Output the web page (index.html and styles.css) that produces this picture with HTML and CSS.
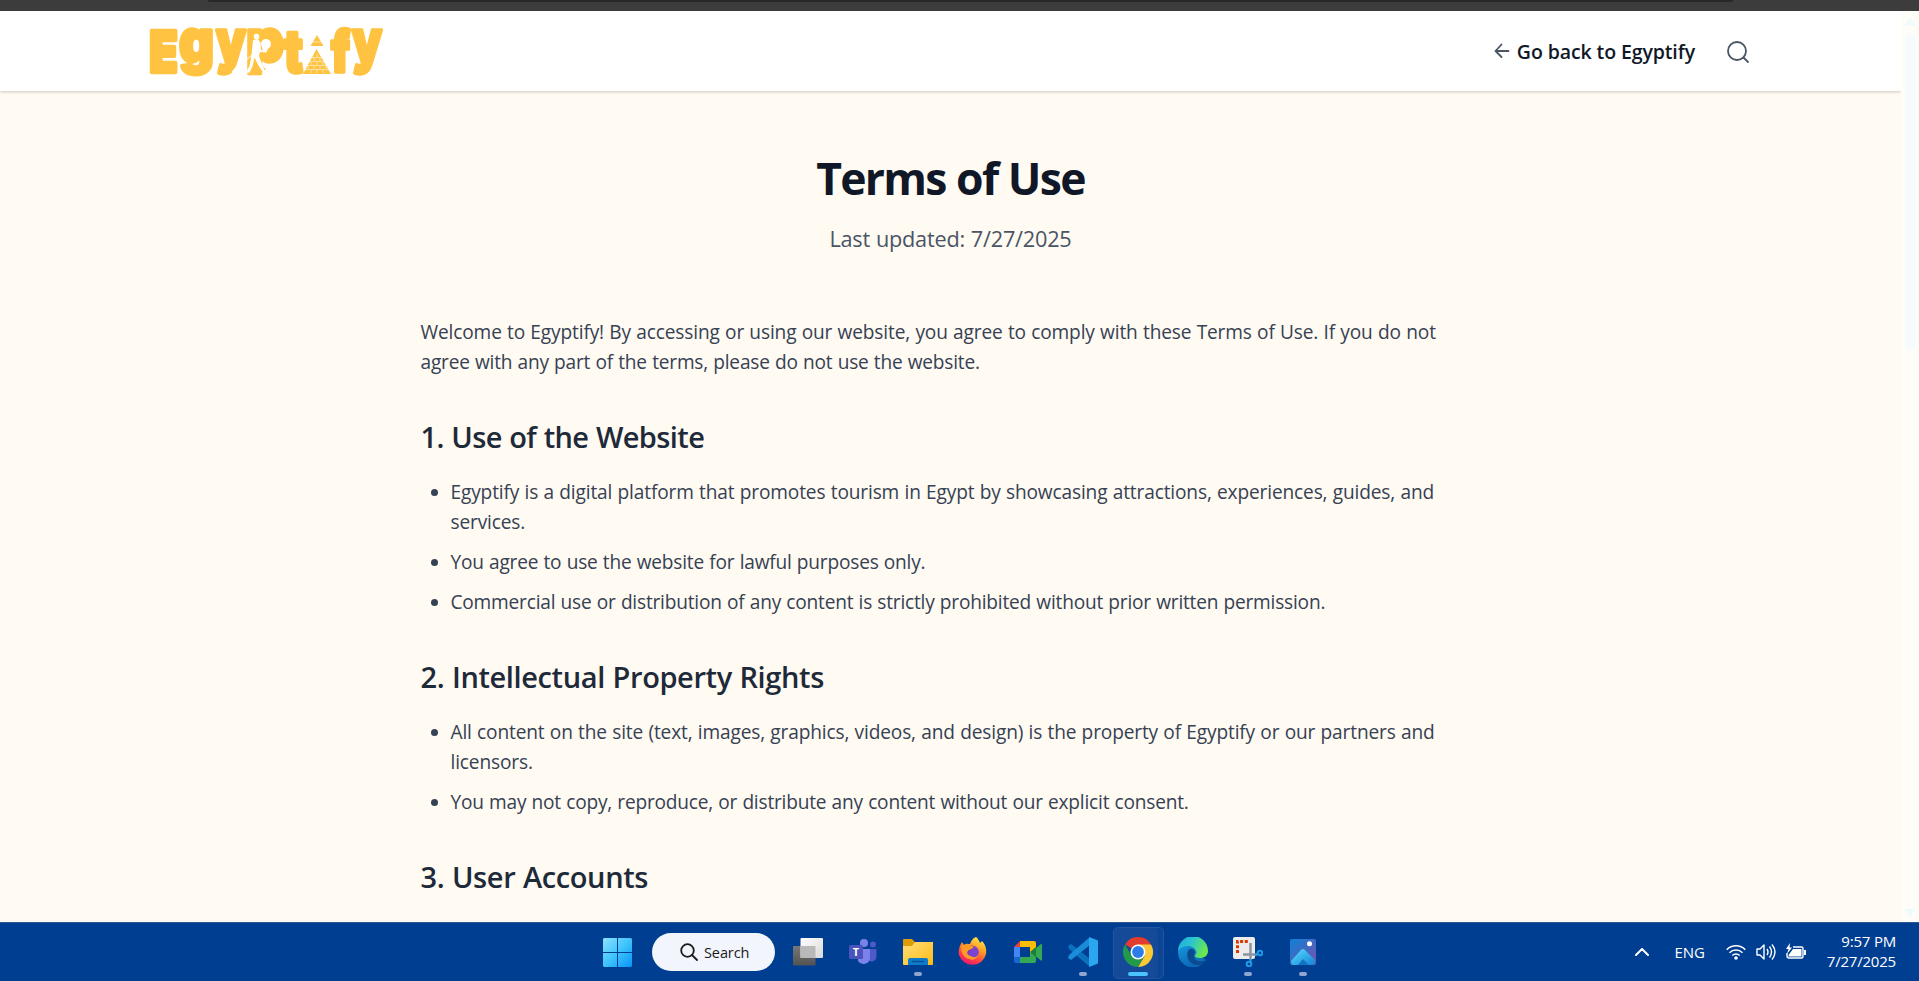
FILE: index.html
```html
<!DOCTYPE html>
<html lang="en">
<head>
<meta charset="utf-8">
<title>Terms of Use</title>
<link rel="stylesheet" href="styles.css">
</head>
<body>
<div class="screen">
  <div class="browser-edge"><div class="omnibox"></div></div>
  <div class="viewport">
    <div class="page">
      <header class="site-header">
        <svg class="logo" viewBox="0 0 234 50" width="234" height="50" role="img" aria-label="Egyptify">
          <g class="logo-letters">
            <text class="heavy" x="-.500" y="46" font-size="56" textLength="28" lengthAdjust="spacingAndGlyphs">E</text>
            <text x="29" y="36" font-size="59" textLength="35" lengthAdjust="spacingAndGlyphs">g</text>
            <text x="66" y="36" font-size="59" textLength="30" lengthAdjust="spacingAndGlyphs">y</text>
            <text x="96" y="36" font-size="59" textLength="38" lengthAdjust="spacingAndGlyphs">p</text>
            <text x="134" y="46" font-size="59" textLength="19" lengthAdjust="spacingAndGlyphs">t</text>
            <text x="181" y="46" font-size="57" textLength="19" lengthAdjust="spacingAndGlyphs">f</text>
            <text x="202" y="36" font-size="59" textLength="30" lengthAdjust="spacingAndGlyphs">y</text>
          </g>
          <path class="gold" d="M167 9l6.500 11h-13zM166.500 23L181 48h-28z"/>
          <path class="gap-thin" d="M162 16h10M160 31.500h13M158 35.500h17M156 39.500h22M154 43.500h26M167 28v3M164 32v3M170 32v3M161 36v3M167 36v3M173 36v3M158 40v3M164 40v3M170 40v3M176 40v3M161 44v3M167 44v3M173 44v3"/>
          <path class="gold" d="M97 46l8-15 13 15z"/>
          <circle class="cut" cx="116" cy="18" r="5"/>
          <circle class="cut" cx="106.500" cy="10.500" r="2.800"/>
          <path class="cut" d="M103 14l5-1 2.500 4 .5 7 6 1-1 1.500-6-.5-1 4 3 8 2.500 6 5.500-1-1 2.500-6 1-4.500-7-4-8-2 9-3 6-4 .500 4-7 2-11z"/>
          <path class="cut" d="M89 37l4 2-7 10-4.500-3z"/>
          <path class="gap" d="M102 29L91 38"/>
        </svg>
        <nav class="site-nav">
          <a class="back-link">
            <svg width="16" height="16" viewBox="0 0 16 16"><path class="nav-stroke" d="M7.500 1.500L1.500 8l6 6M1.500 8H14.500"/></svg>
            <span class="back-label">Go back to Egyptify</span>
          </a>
          <svg class="search-icon" width="24" height="24" viewBox="0 0 24 24"><circle class="nav-stroke" cx="11" cy="11" r="9"/><path class="nav-stroke" d="M17.500 17.500l4.500 4.500"/></svg>
        </nav>
      </header>
      <main class="content">
        <h1>Terms of Use</h1>
        <p class="updated">Last updated: 7/27/2025</p>
        <p>Welcome to Egyptify! By accessing or using our website, you agree to comply with these Terms of Use. If you do not<br><span class="tight">agree with any part of the terms, please do not use the website.</span></p>
        <section>
          <h2 class="tight-heading">1. Use of the Website</h2>
          <ul>
            <li>Egyptify is a digital platform that promotes tourism in Egypt by showcasing attractions, experiences, guides, and<br>services.</li>
            <li class="tight">You agree to use the website for lawful purposes only.</li>
            <li class="tight">Commercial use or distribution of any content is strictly prohibited without prior written permission.</li>
          </ul>
        </section>
        <section>
          <h2>2. Intellectual Property Rights</h2>
          <ul>
            <li>All content on the site (text, images, graphics, videos, and design) is the property of Egyptify or our partners and<br>licensors.</li>
            <li class="tight">You may not copy, reproduce, or distribute any content without our explicit consent.</li>
          </ul>
        </section>
        <section>
          <h2>3. User Accounts</h2>
        </section>
      </main>
    </div>
    <div class="scrollbar">
      <svg width="12" height="8" viewBox="0 0 12 8"><path d="M6 0l6 8H0z"/></svg>
      <div class="thumb"></div>
      <svg class="down" width="12" height="8" viewBox="0 0 12 8"><path d="M6 8l6-8H0z"/></svg>
    </div>
  </div>
  <footer class="taskbar">
    <div class="launcher">
      <div class="start">
        <svg width="29" height="29" viewBox="0 0 29 29">
          <defs><linearGradient id="win" x1="0" y1="0" x2="29" y2="29" gradientUnits="userSpaceOnUse"><stop offset="0" stop-color="#8be2ff"/><stop offset=".5" stop-color="#3fc4fb"/><stop offset="1" stop-color="#0a94f5"/></linearGradient></defs>
          <path fill="url(#win)" d="M1 0h13v14H0V1zM15 0h13l1 1v13H15zM0 15h14v14H1l-1-1zM15 15h14v13l-1 1H15z"/>
        </svg>
      </div>
      <div class="search-pill">
        <svg width="18" height="18" viewBox="0 0 18 18"><circle class="pill-stroke" cx="7.500" cy="7.500" r="6.300"/><path class="pill-stroke" d="M12 12l5 5"/></svg>
        <span>Search</span>
      </div>
      <div class="apps">
        <div class="app">
          <svg width="30" height="30" viewBox="0 0 30 30">
            <defs><linearGradient id="tv1" x1="0" y1="0" x2="1" y2="1"><stop offset="0" stop-color="#fff"/><stop offset="1" stop-color="#d9d9da"/></linearGradient><linearGradient id="tv2" x1="0" y1="0" x2="0" y2="1"><stop offset="0" stop-color="#777"/><stop offset="1" stop-color="#535353"/></linearGradient></defs>
            <rect x="0" y="9" width="22.500" height="19.500" rx="1" fill="url(#tv2)"/><rect x="7.500" y="1" width="22.500" height="20" rx="1" fill="url(#tv1)"/><path fill="#b9b9b9" d="M7.500 9h15v12h-15z"/>
          </svg>
        </div>
        <div class="app">
          <svg width="30" height="30" viewBox="0 0 30 30">
            <circle cx="16" cy="6" r="4" fill="#7b83eb"/><circle cx="25" cy="7.500" r="3" fill="#5059c9"/><path fill="#5059c9" d="M20 12h8.500v8a5 5 0 0 1-8.500 3z"/><path fill="#7b83eb" d="M10 12h12v9a6.500 6.500 0 0 1-12 3z"/><rect x="1" y="8" width="14" height="14" rx="1.500" fill="#4b53bc"/><text class="teams-letter" x="8" y="19" text-anchor="middle">T</text>
          </svg>
        </div>
        <div class="app running">
          <svg width="30" height="30" viewBox="0 0 30 30">
            <defs><linearGradient id="fold" x1="0" y1="0" x2="1" y2="1"><stop offset="0" stop-color="#ffe07a"/><stop offset="1" stop-color="#fdb914"/></linearGradient></defs>
            <path fill="#dd9d05" d="M0 3a1 1 0 0 1 1-1h8l3 3h17a1 1 0 0 1 1 1v6H0z"/><path fill="url(#fold)" d="M0 9h9l3-4h18v22a1 1 0 0 1-1 1H1a1 1 0 0 1-1-1z"/><path fill="#0d7bc9" d="M5 28v-5a2 2 0 0 1 2-2h16a2 2 0 0 1 2 2v5z"/><path stroke="#084d8c" stroke-width="1.200" d="M9 24.500h12"/>
          </svg>
        </div>
        <div class="app">
          <svg width="30" height="30" viewBox="0 0 30 30">
            <defs><linearGradient id="fx" x1=".8" y1="0" x2=".3" y2="1"><stop offset="0" stop-color="#fff24a"/><stop offset=".4" stop-color="#ff9a26"/><stop offset=".75" stop-color="#ff3d47"/><stop offset="1" stop-color="#e51879"/></linearGradient></defs>
            <path fill="url(#fx)" d="M18 0c2 1 3 4 4 6l2-2c3 3 5 8 4 13a14 14 0 0 1-27 1C0 13 2 8 4 5l2 3c2-2 4-1 6-1 1-3 3-6 6-7z"/><circle cx="14" cy="15" r="6.500" fill="#6b3bc6"/><path fill="#ff9a26" d="M3 9c4-3 8 1 13 0-1 3-3 3-5 4-3 2-2 5 2 6 4 1 6-1 7-3 0 6-5 8-9 6-5-1-8-6-8-13z"/><path fill="#7c43cf" d="M16 9c5 2 6 7 3 10-2 2-5 1-6 0-3-1-3-4-1-5 2-2 4-2 4-5z"/>
          </svg>
        </div>
        <div class="app">
          <svg width="30" height="30" viewBox="0 0 30 30">
            <path fill="#ea4335" d="M7 4v6H1z"/><path fill="#fbbc04" d="M7 4h14a2 2 0 0 1 2 2v9l-6 1v-6H7z"/><path fill="#4285f4" d="M1 10h6v10H1z"/><path fill="#1967d2" d="M1 20h6v6H3a2 2 0 0 1-2-2z"/><path fill="#34a853" d="M7 20h10v-4l6-1v9a2 2 0 0 1-2 2H7zM23 11l5-4c1-.5 1 0 1 1v15c0 1-1 1-1 .500l-5-4z"/><path fill="#188038" d="M23 10v10l-6-5z"/>
          </svg>
        </div>
        <div class="app running">
          <svg width="30" height="30" viewBox="0 0 30 30">
            <path fill="#0a72bd" d="M0 9l3-2 19 15v8L1 12z"/><path fill="#1b8cd8" d="M0 21l3 2L22 8V0L1 18z"/><path fill="#2ba6f0" d="M21 0l8 3 1 1v22l-1 1-8 3z"/>
          </svg>
        </div>
        <div class="app active running">
          <svg width="30" height="30" viewBox="0 0 30 30">
            <path fill="#e33b2e" d="M15 15L2 7.500A15 15 0 0 1 28 7.500z"/><path fill="#fcc934" d="M15 7.500h13A15 15 0 0 1 15 30l6.500-11z"/><path fill="#229a4b" d="M2 7.500A15 15 0 0 0 15 30l6.500-11.200L15 15 8.500 18.800z"/><circle cx="15" cy="15" r="7.500" fill="#fff"/><circle cx="15" cy="15" r="5.900" fill="#2b7de9"/>
          </svg>
        </div>
        <div class="app">
          <svg width="30" height="30" viewBox="0 0 30 30">
            <defs><linearGradient id="ed1" x1="0" y1="0" x2="1" y2=".4"><stop offset="0" stop-color="#1fa5e8"/><stop offset=".5" stop-color="#2dc6cb"/><stop offset="1" stop-color="#69e650"/></linearGradient><linearGradient id="ed2" x1="0" y1="0" x2=".5" y2="1"><stop offset="0" stop-color="#1697dd"/><stop offset="1" stop-color="#0b66b5"/></linearGradient></defs>
            <path fill="url(#ed2)" d="M0 15C0 8 7 7 11 8c6 1 8 5 7 8l10 7A15 15 0 0 1 0 15z"/><path fill="#0c4a8f" d="M10 14c-3 8 3 15 12 14 3-1 5-3 6-5-5 3-12 1-12-4 0-2 1-3 1-4-1-4-6-4-7-1z"/><path fill="url(#ed1)" d="M0 14A15 15 0 0 1 30 14c0 5-4 7-8 7-3 0-5-1-5-2 0-1 2-2 1-5C16 8 5 7 0 14z"/>
          </svg>
        </div>
        <div class="app running">
          <svg class="snip" width="30" height="30" viewBox="0 0 30 30">
            <rect x="0" y="0" width="22" height="22" rx="2" fill="#ececec"/><path fill="none" stroke="#d83b01" stroke-width="3" stroke-dasharray="3 1.700" d="M4.500 16V4.500H16"/><path fill="none" stroke="#8b949d" stroke-width="2.400" d="M17.500 6v17M10 17.500h14"/><g fill="none" stroke="#1e9be6" stroke-width="2"><circle cx="16" cy="27" r="2.300"/><circle cx="27" cy="16" r="2.300"/><path d="M17.500 22v3M22 17.500l3-1"/></g>
          </svg>
        </div>
        <div class="app running">
          <svg width="26" height="26" viewBox="0 0 26 26">
            <defs><linearGradient id="ph" x1="0" y1="0" x2="1" y2="1"><stop offset="0" stop-color="#0c83d6"/><stop offset="1" stop-color="#7a4fae"/></linearGradient><linearGradient id="mt" x1="0" y1="0" x2="1" y2="1"><stop offset="0" stop-color="#5be0ff"/><stop offset="1" stop-color="#1481d6"/></linearGradient></defs>
            <rect width="26" height="26" rx="2" fill="url(#ph)"/><path fill="url(#mt)" d="M1 22L11 11q2-2 4 0l10 10v3l-1 2H2z"/><path fill="#1373c5" d="M8 26l5-6 6 6z"/><circle cx="19.500" cy="4.700" r="2.500" fill="#fff"/>
          </svg>
        </div>
      </div>
    </div>
    <div class="tray">
      <svg class="chevron" width="14" height="8" viewBox="0 0 14 8"><path class="tray-stroke thick" d="M1 7l6-6 6 6"/></svg>
      <span class="lang">ENG</span>
      <svg width="20" height="16" viewBox="0 0 20 16"><path class="tray-stroke" d="M.7 5.700a13 13 0 0 1 18.600 0M3.500 8.700a9.200 9.200 0 0 1 13 0M6.300 11.500a5.300 5.300 0 0 1 7.400 0"/><circle cx="10" cy="14" r="1.800" fill="#fff"/></svg>
      <svg width="20" height="18" viewBox="0 0 20 18"><path class="tray-stroke" d="M1 6h3l4-4v14l-4-4H1zM11 6q2 3 0 6M13.500 3.500q4 5.500 0 11M16 1.500q6 7.500 0 15"/></svg>
      <svg width="20" height="18" viewBox="0 0 20 18"><path class="tray-stroke" d="M7 4h8.500q1.500 0 1.500 1.500v8q0 1.500-1.500 1.500H3q-2 0-2-2v-3"/><path fill="#fff" d="M7 6h8.500v7.500h-13V12zM18 7h2v5h-2zM4 0L0 6h2.500L1 11l5-6.500H3.500z"/></svg>
      <div class="clock"><span>9:57 PM</span><span>7/27/2025</span></div>
    </div>
  </footer>
</div>
</body>
</html>
```
FILE: styles.css
```css
* { box-sizing: border-box; margin: 0; padding: 0; }
body { font-family: "Open Sans", "Noto Sans", sans-serif; overflow: hidden; }
svg { display: block; flex: none; }
.screen { width: 1919px; height: 981px; display: flex; flex-direction: column; background: #fffaf2; }
.browser-edge { height: 11px; flex: none; background: #3c3c3c; padding: 0 186px 0 208px; }
.omnibox { height: 2px; background: #282828; border-radius: 0 0 8px 8px; }
.viewport { flex: 1; min-height: 0; display: flex; }
.page { width: 1901px; overflow: hidden; }

.site-header { height: 80px; padding: 0 151px 0 150px; display: flex; align-items: center; justify-content: space-between; background: #fff; box-shadow: 0 1px 3px rgba(0, 0, 0, .2); }
.logo { overflow: visible; }
.logo-letters { font-family: Inter, sans-serif; font-weight: 900; fill: #ffc341; stroke: #ffc341; stroke-width: 3.4; stroke-linejoin: round; }
.heavy { stroke-width: 4.6; }
.gold { fill: #ffc341; }
.cut { fill: #fff; }
.gap { fill: none; stroke: #fff; stroke-width: 1; }
.gap-thin { fill: none; stroke: #fff; stroke-width: .5; }
.site-nav { display: flex; align-items: center; gap: 31px; }
.back-link { display: flex; align-items: center; gap: 7px; color: #101828; font-size: 19.5px; font-weight: 600; letter-spacing: -.1px; }
.back-label { padding-top: 1px; }
.nav-stroke { fill: none; stroke: #4a5565; stroke-width: 1.8; stroke-linecap: round; stroke-linejoin: round; }
.search-icon { margin-top: 1px; }

.content { width: 1120px; margin: 0 auto; padding: 62px 30px 0; color: #364153; font-size: 19.1px; line-height: 30px; letter-spacing: -.14px; word-spacing: .5px; white-space: nowrap; }
.tight { letter-spacing: -.2px; }
h1 { font-size: 44.5px; line-height: 50px; font-weight: 700; letter-spacing: -1.7px; text-align: center; color: #101828; margin-bottom: 18px; }
.content .updated { font-size: 21.7px; line-height: 35px; letter-spacing: -.22px; text-align: center; color: #4a5565; margin-bottom: 61px; }
section { margin-top: 40px; }
h2 { font-size: 29px; line-height: 40px; font-weight: 600; letter-spacing: -.38px; color: #1e2939; margin-bottom: 20px; }
h2.tight-heading { letter-spacing: -.6px; }
ul { padding-left: 30px; display: flex; flex-direction: column; gap: 10px; }

.scrollbar { width: 18px; background: #fffdf8; display: flex; flex-direction: column; align-items: center; padding: 7px 0 5px; fill: #effafc; }
.thumb { width: 11px; height: 318px; margin-top: 7px; border-radius: 6px; background: #f6fcfd; }
.down { margin-top: auto; }

.taskbar { height: 59px; flex: none; display: flex; justify-content: space-between; background: #003e92; border-top: 1px solid #2c568c; padding: 0 23px 0 603px; color: #fff; }
.launcher { display: flex; align-items: center; }
.start { width: 49px; }
.search-pill { width: 123px; height: 38px; border-radius: 19px; background: #f2f5fb; color: #1b1b1b; display: flex; align-items: center; gap: 6px; padding-left: 28px; font-size: 14.5px; letter-spacing: -.1px; }
.pill-stroke { fill: none; stroke: #1b1b1b; stroke-width: 1.8; stroke-linecap: round; }
.apps { display: flex; margin-left: 5px; height: 58px; }
.app { width: 55px; display: flex; align-items: center; justify-content: center; position: relative; }
.running::after { content: ""; position: absolute; left: 23.5px; bottom: 5px; width: 8px; height: 4px; border-radius: 2px; background: #8fa5cf; }
.active::before { content: ""; position: absolute; left: 3px; top: 4px; width: 49px; height: 50px; border-radius: 5px; background: #144a98; border: 1px solid #23549f; box-shadow: inset -5px 0 #0c4496; }
.active svg { position: relative; }
.active::after { left: 17.5px; width: 20px; background: #4cc2ff; }
.teams-letter { font-size: 11px; font-weight: 700; fill: #fff; }
.tray { display: flex; align-items: center; font-size: 15px; }
.chevron { margin-right: 26px; }
.lang { margin-right: 21px; letter-spacing: -.1px; }
.tray-stroke { fill: none; stroke: #fff; stroke-width: 1.4; stroke-linejoin: round; }
.thick { stroke-width: 2; stroke-linecap: round; }
.tray svg + svg { margin-left: 10px; }
.clock { margin: -2px 0 0 21px; display: flex; flex-direction: column; align-items: flex-end; font-size: 15px; line-height: 20px; letter-spacing: -.2px; }
```
